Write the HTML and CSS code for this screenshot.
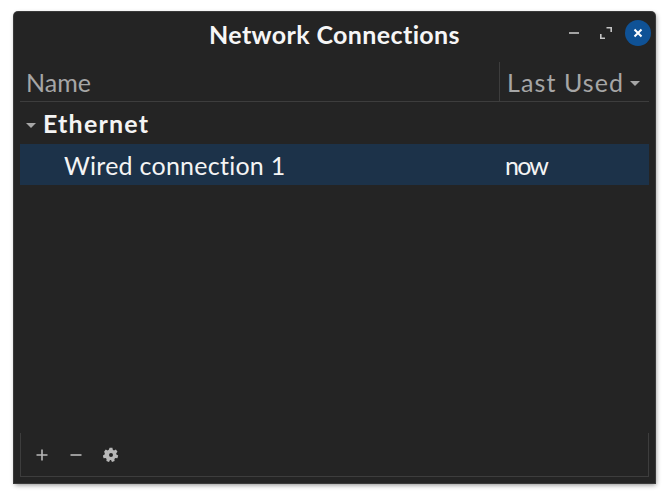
FILE: index.html
```html
<!DOCTYPE html>
<html lang="en">
<head>
<meta charset="utf-8">
<title>Network Connections</title>
<link rel="stylesheet" href="styles.css">
</head>
<body>
<main class="window">
  <header class="titlebar">
    <h1 class="title">Network Connections</h1>
    <div class="controls">
      <svg class="ctl ctl-min" viewBox="0 0 12 12" width="12" height="12"><path d="M1 6h10" stroke="#c4c4c4" stroke-width="1.6"/></svg>
      <svg class="ctl ctl-max" viewBox="0 0 12 12" width="12" height="12"><path d="M6.500.8h4.700v4.200M.8 7v4.200h4.200" stroke="#c4c4c4" stroke-width="1.6" fill="none"/></svg>
      <span class="close"><svg viewBox="0 0 10 10" width="10" height="10"><path d="M1.500 1.500l7 7M8.500 1.500l-7 7" stroke="#fff" stroke-width="2"/></svg></span>
    </div>
  </header>
  <section class="list">
    <div class="columns">
      <div class="col-name">Name</div>
      <div class="col-used">Last Used<span class="caret"></span></div>
    </div>
    <div class="group"><span class="caret group-caret"></span>Ethernet</div>
    <div class="row">
      <div class="row-name">Wired connection 1</div>
      <div class="row-used">now</div>
    </div>
  </section>
  <footer class="toolbar">
    <svg class="tool" viewBox="0 0 14 14" width="14" height="14"><path d="M7 1.500v11M1.500 7h11" stroke="#b8b8b8" stroke-width="1.600"/></svg>
    <svg class="tool" viewBox="0 0 14 14" width="14" height="14"><path d="M1.500 7h11" stroke="#b8b8b8" stroke-width="1.600"/></svg>
    <svg class="tool" viewBox="0 0 16 16" width="16" height="16"><path fill="#b8b8b8" fill-rule="evenodd" d="M6.600.8h2.800l.4 2 1.200.6 1.900-.9 1.600 2.200-1.300 1.500.2 1.400 1.800 1-.8 2.600-2-.1-1 1 .2 2-2.600.8-1-1.800h-1l-1 1.800-2.600-.8.2-2-1-1-2 .1-.8-2.600 1.800-1 .2-1.400L1.100 4.700l1.600-2.200 1.900.9 1.200-.6zM8 6a2 2 0 1 0 0 4 2 2 0 0 0 0-4z"/></svg>
  </footer>
</main>
</body>
</html>
```
FILE: styles.css
```css
* { box-sizing: border-box; }
html, body { margin: 0; background: #fff; }
body { padding: 12px 16px 17px 14px; height: 500px; width: 671px; font-family: "Comic Sans MS", "Lato", "Open Sans", sans-serif; }
.window {
  width: 641px; height: 471px; background: #242424; border-radius: 4px 4px 0 0;
  box-shadow: 0 0 0 1px #3a3a3a, 1px 2px 5px rgba(0,0,0,.45);
  display: flex; flex-direction: column; padding: 0 6px 6px 6px;
}
.titlebar { height: 50px; flex: none; display: flex; align-items: center; justify-content: center; position: relative; }
.title { margin: 0; font-size: 25px; font-weight: 700; color: #f6f6f6; letter-spacing: .38px; position: relative; top: -3px; }
.controls { position: absolute; right: -2px; top: 8px; display: flex; align-items: center; }
.close { width: 26px; height: 26px; border-radius: 50%; background: #0f5296; display: flex; align-items: center; justify-content: center; margin-left: 13px; }
.ctl { display: block; }
.ctl-max { margin-left: 20px; }
.list { flex: 1; display: flex; flex-direction: column; }
.columns { height: 40px; flex: none; display: flex; border-bottom: 1px solid #3d3d3d; font-size: 25px; color: #a6a6a6; }
.col-name { flex: 1; padding: 5px 0 0 6px; }
.col-used { width: 150px; padding: 5px 0 0 7px; border-left: 1px solid #3d3d3d; display: flex; letter-spacing: 1.1px; }
.caret { width: 0; height: 0; border: 5px solid transparent; border-top-color: #a6a6a6; border-bottom: 0; margin: 14px 0 0 6px; display: inline-block; }
.group { height: 42px; flex: none; font-size: 25px; font-weight: 700; color: #f4f4f4; padding: 6px 0 0 6px; display: flex; letter-spacing: 1.2px; }
.group-caret { margin: 15px 7px 0 0; }
.row { height: 41px; flex: none; background: #1c3249; display: flex; font-size: 25px; color: #f4f4f4; }
.row-name { flex: 1; padding: 6px 0 0 44px; letter-spacing: .25px; }
.row-used { width: 145px; padding: 6px 0 0 1px; letter-spacing: -1.8px; }
.toolbar { height: 44px; flex: none; border: 1px solid #3d3d3d; border-top: 0; display: flex; align-items: center; gap: 20px; padding: 0 0 0 14px; }
.tool { display: block; }
```
